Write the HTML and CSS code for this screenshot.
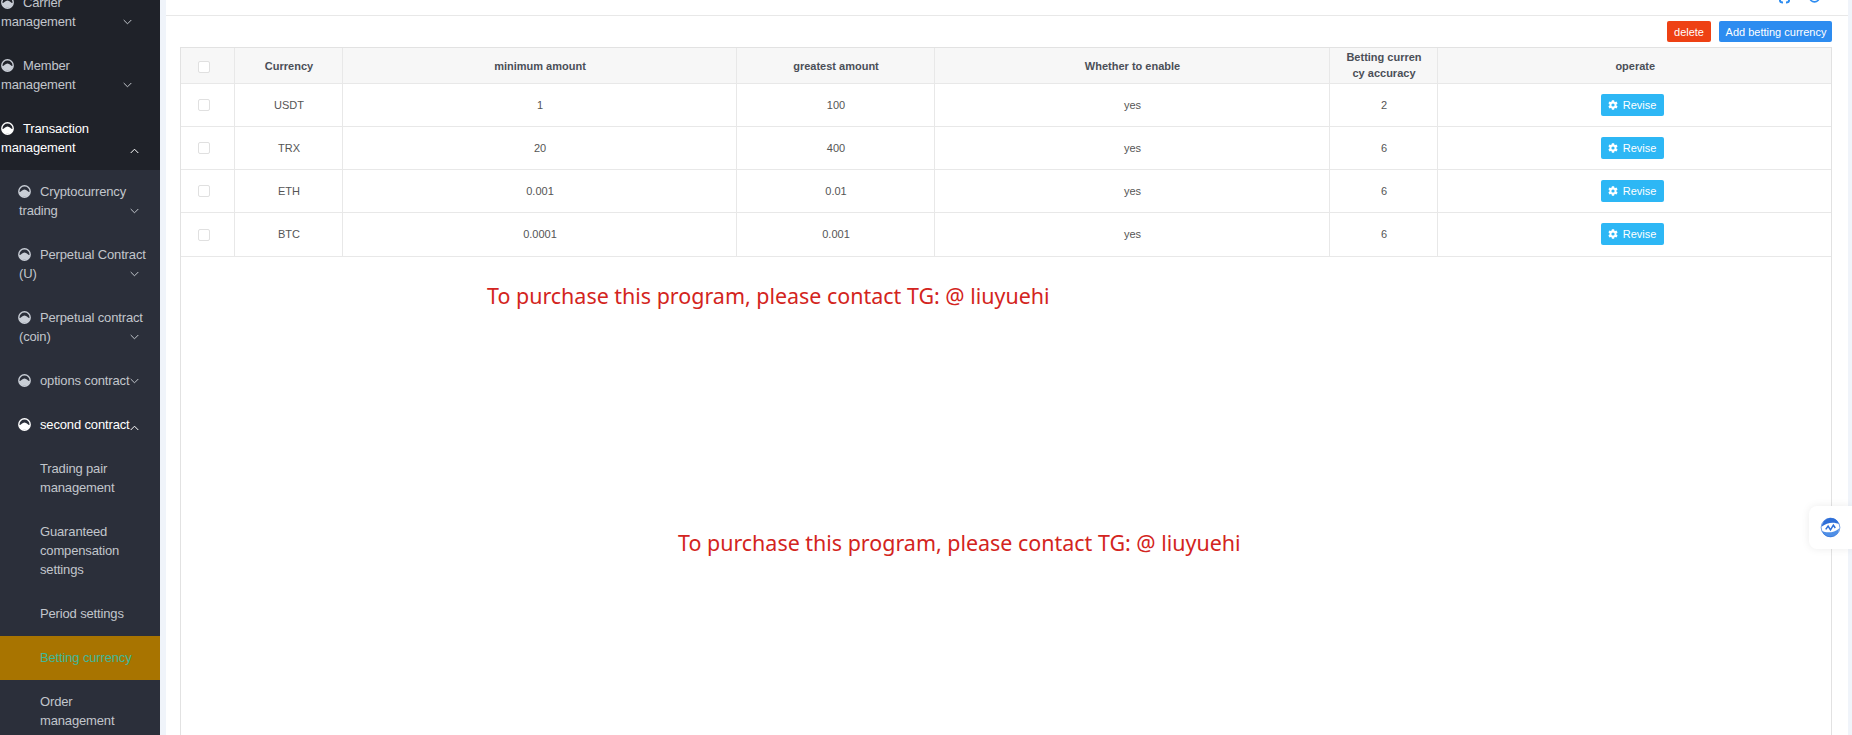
FILE: index.html
```html
<!DOCTYPE html>
<html lang="en">
<head>
<meta charset="utf-8">
<title>Betting currency</title>
<link rel="stylesheet" href="styles.css">
</head>
<body>
<svg class="defs" width="0" height="0" aria-hidden="true">
  <symbol id="pie" viewBox="0 0 13 13">
    <circle cx="6.500" cy="6.500" r="5.700" fill="none" stroke="currentColor" stroke-width="1.400"/>
    <path d="M.8 7C3 7.600 4 4.400 6.500 4.400S10 7.600 12.200 7A5.800 5.800 0 0 1 .8 7z" fill="currentColor"/>
  </symbol>
  <symbol id="down" viewBox="0 0 9 6"><path d="M.7 1l3.800 3.800L8.300 1" fill="none" stroke="currentColor" stroke-width="1"/></symbol>
  <symbol id="up" viewBox="0 0 9 6"><path d="M.7 5l3.800-3.800L8.300 5" fill="none" stroke="currentColor" stroke-width="1"/></symbol>
  <symbol id="gear" viewBox="0 0 10 10"><path fill="currentColor" fill-rule="evenodd" d="M3.900.3h2.200l.3 1.400.8.400 1.300-.6 1.100 1.900-1.100.9v1.400l1.100.9-1.100 1.900-1.300-.6-.8.400-.3 1.400H3.900l-.3-1.400-.8-.4-1.300.6L.4 6.500l1.100-.9V4.200L.4 3.300l1.100-1.900 1.300.6.800-.4zM5 3.400a1.600 1.600 0 1 0 0 3.200 1.600 1.600 0 0 0 0-3.200z"/></symbol>
</svg>
<div class="app">
  <aside class="sidebar">
    <div class="menu-top">
      <div class="item two"><svg class="pie"><use href="#pie"/></svg><span>Carrier<br>management</span><svg class="chev"><use href="#down"/></svg></div>
      <div class="item two"><svg class="pie"><use href="#pie"/></svg><span>Member<br>management</span><svg class="chev"><use href="#down"/></svg></div>
      <div class="item two active"><svg class="pie"><use href="#pie"/></svg><span>Transaction<br>management</span><svg class="chev"><use href="#up"/></svg></div>
    </div>
    <div class="submenu">
      <div class="item two sub"><svg class="pie"><use href="#pie"/></svg><span>Cryptocurrency<br>trading</span><svg class="chev"><use href="#down"/></svg></div>
      <div class="item two sub"><svg class="pie"><use href="#pie"/></svg><span>Perpetual Contract<br>(U)</span><svg class="chev"><use href="#down"/></svg></div>
      <div class="item two sub"><svg class="pie"><use href="#pie"/></svg><span>Perpetual contract<br>(coin)</span><svg class="chev"><use href="#down"/></svg></div>
      <div class="item one sub"><svg class="pie"><use href="#pie"/></svg><span>options contract</span><svg class="chev"><use href="#down"/></svg></div>
      <div class="item one sub active"><svg class="pie"><use href="#pie"/></svg><span>second contract</span><svg class="chev"><use href="#up"/></svg></div>
      <div class="leaf">Trading pair<br>management</div>
      <div class="leaf">Guaranteed<br>compensation<br>settings</div>
      <div class="leaf">Period settings</div>
      <div class="leaf current">Betting currency</div>
      <div class="leaf">Order<br>management</div>
    </div>
  </aside>
  <main class="main">
    <header class="head">
      <h1 class="title">Betting currency</h1>
      <svg class="head-icon first" viewBox="0 0 11 12"><path d="M1 0v5c0 1.500 1 2 3 2M10 0v5c0 1.500-1 2-3 2" transform="translate(0 -4.500)" fill="none" stroke="currentColor" stroke-width="2"/></svg>
      <svg class="head-icon second" viewBox="0 0 11 12"><circle cx="5.500" cy="-3" r="4.800" fill="none" stroke="currentColor" stroke-width="1.800"/></svg>
    </header>
    <div class="toolbar">
      <button class="btn red">delete</button>
      <button class="btn blue">Add betting currency</button>
    </div>
    <div class="table-box">
      <table class="grid">
        <colgroup>
          <col class="c1"><col class="c2"><col class="c3"><col class="c4"><col class="c5"><col class="c6"><col class="c7">
        </colgroup>
        <thead>
          <tr>
            <th><span class="check"></span></th>
            <th>Currency</th>
            <th>minimum amount</th>
            <th>greatest amount</th>
            <th>Whether to enable</th>
            <th class="wrapped">Betting curren<br>cy accuracy</th>
            <th>operate</th>
          </tr>
        </thead>
        <tbody>
          <tr><td><span class="check"></span></td><td>USDT</td><td>1</td><td>100</td><td>yes</td><td>2</td><td><button class="revise"><svg class="gear"><use href="#gear"/></svg>Revise</button></td></tr>
          <tr><td><span class="check"></span></td><td>TRX</td><td>20</td><td>400</td><td>yes</td><td>6</td><td><button class="revise"><svg class="gear"><use href="#gear"/></svg>Revise</button></td></tr>
          <tr><td><span class="check"></span></td><td>ETH</td><td>0.001</td><td>0.01</td><td>yes</td><td>6</td><td><button class="revise"><svg class="gear"><use href="#gear"/></svg>Revise</button></td></tr>
          <tr class="last"><td><span class="check"></span></td><td>BTC</td><td>0.0001</td><td>0.001</td><td>yes</td><td>6</td><td><button class="revise"><svg class="gear"><use href="#gear"/></svg>Revise</button></td></tr>
        </tbody>
      </table>
      <p class="watermark wm1">To purchase this program, please contact TG: @ liuyuehi</p>
      <p class="watermark wm2">To purchase this program, please contact TG: @ liuyuehi</p>
    </div>
  </main>
  <div class="float-tab">
    <svg viewBox="0 0 22 22" width="21" height="21">
      <path d="M2 10A9.200 9.200 0 0 1 20 7.500C15 4.800 7 5.500 2 10z" fill="#2f6fd8"/>
      <path d="M20 12A9.200 9.200 0 0 1 2 14.500C7 17.200 15 16.500 20 12z" fill="#4f8fe6"/>
      <circle cx="11" cy="11" r="9.800" fill="none" stroke="#2f6fd8" stroke-width=".7"/>
      <path d="M6 13l2.500-3.500 2.500 4 3-5 2 3" fill="none" stroke="#2f6fd8" stroke-width="1.600"/>
    </svg>
  </div>
</div>
</body>
</html>
```
FILE: styles.css
```css
* { box-sizing: border-box; }
html, body { margin: 0; height: 735px; overflow: hidden; }
body { font-family: "Liberation Sans", Arial, sans-serif; background: #f0f4fa; }
.defs { position: absolute; }
.app { display: flex; height: 735px; overflow: hidden; position: relative; }

.sidebar { width: 160px; flex: none; background: #2b2f3a; color: #c2c6cc; font-size: 13px; letter-spacing: -.15px; line-height: 19px; overflow: hidden; }
.menu-top { background: #1f2229; margin-top: -19px; }
.item { position: relative; padding-left: 1px; }
.item span { display: block; }
.item .pie { position: absolute; left: 1px; width: 13px; height: 13px; color: #c9ced6; }
.two { height: 63px; padding-top: 12px; }
.two span, .one span { text-indent: 22px; }
.sub.two span, .sub.one span { text-indent: 21px; }
.two .pie { top: 15px; }
.chev { position: absolute; width: 9px; height: 6px; left: 123px; top: 38px; color: #c2c6cc; }
.active { color: #fff; }
.active .pie, .active .chev { color: #fff; }
.menu-top .active .chev { left: 130px; top: 41px; }
.sub { padding-left: 19px; }
.sub .pie { left: 18px; }
.sub .chev { left: 130px; }
.one { height: 44px; padding-top: 12px; white-space: nowrap; }
.one .pie { top: 15px; }
.sub.one .chev { top: 19px; }
.sub.one.active .chev { top: 22px; }
.leaf { padding: 12px 0 13px 40px; }
.leaf.current { background: #a87400; color: #40b89a; }

.main { width: 1682px; margin-left: 6px; flex: none; background: #fff; display: flex; flex-direction: column; height: 735px; }
.head { height: 16px; border-bottom: 1px solid #e8e8e8; position: relative; overflow: hidden; flex: none; }
.title { margin: -18px 0 0 106px; font-size: 13px; line-height: 20px; font-weight: 700; color: #333; }
.head-icon { position: absolute; top: 0; width: 11px; height: 12px; color: #2d8cf0; }
.first { left: 1613px; }
.second { left: 1643px; }
.toolbar { height: 31px; padding: 5px 16px 0 0; display: flex; justify-content: flex-end; gap: 8px; flex: none; }
.btn { height: 21px; border: 0; border-radius: 2px; color: #fff; font: 11px "Liberation Sans", Arial, sans-serif; padding: 0 7px; }
.red { background: #ee4114; }
.blue { background: #2d8cf0; width: 113px; padding: 0 0 0 1px; }
.table-box { margin: 0 16px 0 14px; border: 1px solid #e2e2e2; border-bottom: 0; flex: 1; position: relative; }
.grid { width: 100%; border-collapse: collapse; table-layout: fixed; font-size: 11px; color: #555; }
.c1 { width: 53px; } .c2 { width: 108px; } .c3 { width: 394px; } .c4 { width: 198px; } .c5 { width: 395px; } .c6 { width: 108px; }
.grid th, .grid td { text-align: center; border: 1px solid #e8e8e8; padding: 0 0 0 2px; }
.grid th:first-child, .grid td:first-child, .grid td:last-child { padding-left: 0; }
.grid tr > :first-child { border-left: 0; }
.grid tr > :last-child { border-right: 0; }
.grid thead tr:first-child th { border-top: 0; }
.grid th { height: 35px; background: #f7f7f7; font-weight: 700; color: #4b4f58; line-height: 16px; padding-top: 2px; }
.grid th.wrapped { padding-top: 0; }
.grid td { height: 43px; }
.grid .last td { height: 44px; }
.check { display: inline-block; width: 12px; height: 12px; margin-right: 6px; border: 1px solid #e0e0e0; border-radius: 2px; background: #fff; vertical-align: middle; }
.revise { height: 22px; width: 63px; border: 0; border-radius: 2px; background: #2db7f5; color: #fff; font: 11px "Liberation Sans", Arial, sans-serif; display: inline-flex; align-items: center; gap: 5px; margin-right: 4px; padding: 0 0 0 7px; vertical-align: middle; }
.gear { width: 10px; height: 10px; }
.watermark { position: absolute; margin: 0; color: #d32420; font-family: "Noto Sans", sans-serif; font-size: 21.45px; line-height: 30px; white-space: nowrap; }
.wm1 { left: 306px; top: 233px; }
.wm2 { left: 497px; top: 480px; }

.float-tab { position: absolute; right: 0; top: 506px; width: 43px; height: 43px; background: #fff; border-radius: 8px 0 0 8px; box-shadow: 0 0 8px rgba(0,0,0,.08); display: flex; align-items: center; padding-left: 11px; }
```
